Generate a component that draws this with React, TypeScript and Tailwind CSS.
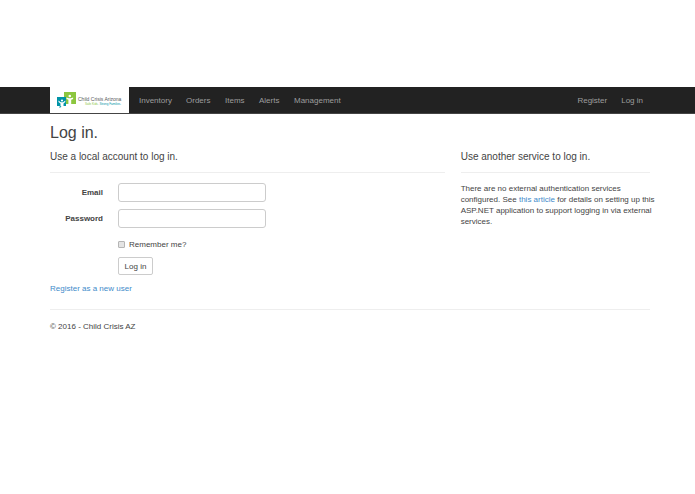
import React from "react";

const navLinks = [
  { label: "Inventory", width: "w-[47px]" },
  { label: "Orders", width: "w-[39px]" },
  { label: "Items", width: "w-[34px]" },
  { label: "Alerts", width: "w-[35px]" },
  { label: "Management", width: "w-[60px]" },
];

const bodyFont = "font-['Liberation_Sans',Arial,sans-serif]";

function Logo() {
  return (
    <svg
      viewBox="0 0 79 26"
      className="block h-[26px] w-[79px] bg-white"
      role="img"
      aria-label="Child Crisis Arizona"
    >
      <rect x="14" y="5" width="12" height="12" fill="#8cc63f" />
      <path d="M7 10h9v9h-4.500l-1 1.500H9l1-1.500H7z" fill="#0093a7" />
      <circle cx="19.800" cy="9" r="1.300" fill="#fff" />
      <path d="M16.500 10.500l2.300.8h2l2.300-.8v1.400l-1.900.8V17h-2.800v-4.300l-1.900-.8z" fill="#fff" />
      <circle cx="12" cy="13.500" r="1.100" fill="#fff" />
      <path d="M8.500 13.500l2.300 1.700h2.300l2.200-1.700v1.400l-1.800 1.500v2.800h-3v-2.800l-2-1.500z" fill="#fff" />
      <text x="28" y="14" fontSize="5" fill="#58595b">
        Child Crisis Arizona
      </text>
      <text x="35" y="18" fontSize="3" fill="#8cc63f">
        Safe Kids.<tspan fill="#0093a7"> Strong Families.</tspan>
      </text>
    </svg>
  );
}

export default function App() {
  return (
    <div className={`${bodyFont} pt-[87px] text-[8px] leading-[11px] text-[#444444]`}>
      <header className="border-b border-[#444444] bg-[#222222] pl-[50px] pr-[45px]">
        <nav className="flex items-center">
          <a href="#home">
            <Logo />
          </a>
          <div className="ml-[10px] flex flex-1 text-[#9d9d9d]">
            {navLinks.map((link) => (
              <a key={link.label} href="#nav" className={`${link.width} whitespace-nowrap`}>
                {link.label}
              </a>
            ))}
          </div>
          <div className="flex gap-[14px] pr-[7px] text-[#9d9d9d]">
            <a href="#register">Register</a>
            <a href="#login">Log in</a>
          </div>
        </nav>
      </header>

      <div className="pl-[50px] pr-[45px]">
        <h1 className="pt-[10px] text-[16px] leading-[18px]">Log in.</h1>

        <main className="-mx-2 grid grid-cols-3 pt-[9px]">
          <section className="col-span-2 px-2">
            <h2 className="text-[10px] leading-[12px]">Use a local account to log in.</h2>
            <hr className="mt-[9px] border-[#eeeeee]" />
            <form onSubmit={(event) => event.preventDefault()}>
              <div className="mt-[10px] grid grid-cols-[53px_148px] items-center gap-x-[15px] gap-y-[7px]">
                <label htmlFor="email" className="text-right font-bold">
                  Email
                </label>
                <input
                  id="email"
                  type="email"
                  className="h-[19px] w-full rounded-[3px] border border-[#cccccc] bg-white px-[6px]"
                />
                <label htmlFor="password" className="text-right font-bold">
                  Password
                </label>
                <input
                  id="password"
                  type="password"
                  className="h-[19px] w-full rounded-[3px] border border-[#cccccc] bg-white px-[6px]"
                />
              </div>
              <div className="ml-[68px] mt-[11px] flex items-center gap-[4px]">
                <input
                  id="remember"
                  type="checkbox"
                  className="h-[7px] w-[7px] appearance-none rounded-[1px] border border-[#b5b5b5] bg-[#e4e4e4] checked:bg-[#428bca]"
                />
                <label htmlFor="remember">Remember me?</label>
              </div>
              <button
                type="submit"
                className="ml-[68px] mt-[7px] block h-[18px] w-[35px] rounded-[2px] border border-[#cccccc] bg-white"
              >
                Log in
              </button>
            </form>
            <p className="mt-[8px]">
              <a href="#register" className="text-[#428bca]">
                Register as a new user
              </a>
            </p>
          </section>

          <section className="pl-2">
            <h2 className="text-[10px] leading-[12px]">Use another service to log in.</h2>
            <hr className="mr-2 mt-[9px] border-[#eeeeee]" />
            <p className="mt-[10px]">
              There are no external authentication services configured. See{" "}
              <a href="#article" className="text-[#428bca]">
                this article
              </a>{" "}
              for details on setting up this ASP.NET application to support logging in via external
              services.
            </p>
          </section>
        </main>

        <footer className="mt-[15px] border-t border-[#eeeeee] pt-[11px]">
          <p>© 2016 - Child Crisis AZ</p>
        </footer>
      </div>
    </div>
  );
}
